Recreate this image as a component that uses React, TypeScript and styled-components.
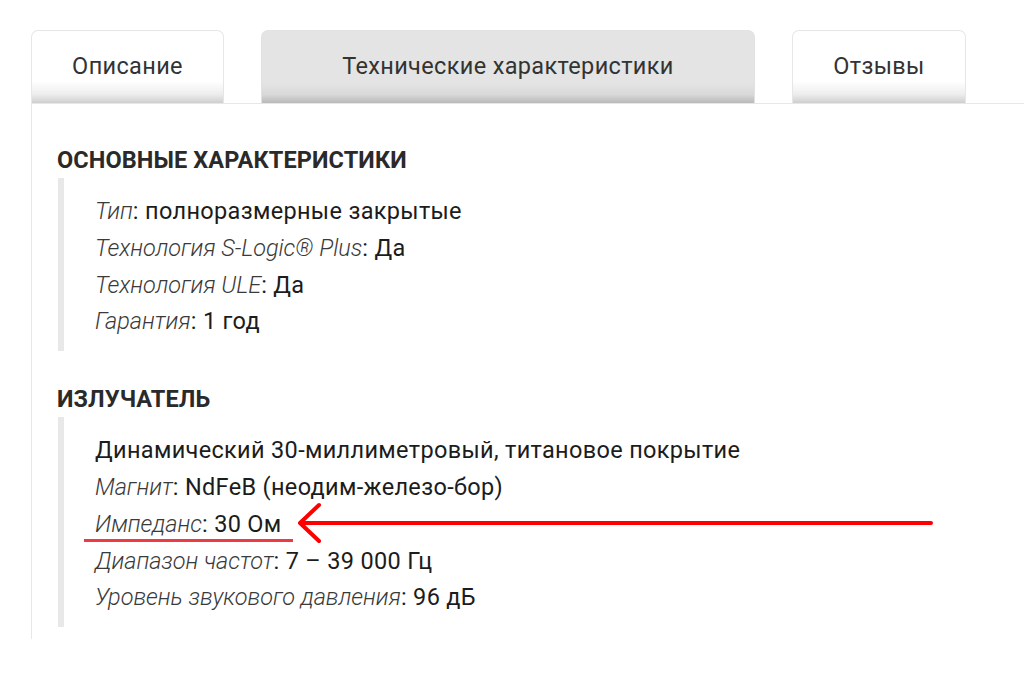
import React from 'react'
import { styled, createGlobalStyle } from 'styled-components';

const GlobalStyle = createGlobalStyle`
	html, body {
		margin: 0;
		padding: 0;
		background: #ffffff;
	}
	body {
		font-family: Roboto, "Noto Sans", "Liberation Sans", sans-serif;
		color: #2b2b2b;
	}
`

type TabProps = {
	$active: boolean;
	$width: number;
}

const Page = styled.div`
	position: relative;
	width: 1024px;
	height: 683px;
	overflow: hidden;
	padding: 30px 0 0 31px;
	box-sizing: border-box;
`
const Tabs = styled.div`
	display: flex;
	gap: 37px;
	height: 73px;
`
const Tab = styled.div<TabProps>`
	width: ${({ $width }) => $width + 'px'};
	box-sizing: border-box;
	display: flex;
	justify-content: center;
	align-items: center;
	padding-bottom: 2px;
	border: 1px solid ${({ $active }) => $active ? '#e2e2e2' : '#e6e6e6'};
	border-bottom: none;
	border-radius: 7px 7px 0 0;
	font-size: 23.5px;
	letter-spacing: 0.35px;
	color: #333333;
	background: ${({ $active }) => $active
		? 'linear-gradient(to bottom, #e4e4e4 0%, #e4e4e4 72%, #d9d9d9 88%, #b9b9b9 100%)'
		: 'linear-gradient(to bottom, #ffffff 0%, #ffffff 70%, #ededed 88%, #cfcfcf 100%)'};
`
const Panel = styled.div`
	border-top: 1px solid #e6e6ee;
	border-left: 1px solid #e6e6ee;
	padding: 44px 0 12px 25px;
`
const Heading = styled.h3`
	margin: 0 0 6px;
	font-size: 23.5px;
	line-height: 24px;
	letter-spacing: 0.1px;
	font-weight: 700;
	color: #2a2a2a;
	text-transform: uppercase;
`
const Quote = styled.div<{ $last?: boolean }>`
	margin: 0 0 ${({ $last }) => $last ? '0' : '36px'} 1px;
	border-left: 6px solid #e8e8e8;
	padding: 15px 0 11px 31px;
`
const Row = styled.div`
	font-size: 23.5px;
	line-height: 36.8px;
	letter-spacing: 0.33px;
	color: #1c1c1c;
	white-space: nowrap;
`
const Label = styled.span`
	font-style: italic;
	font-weight: 300;
	letter-spacing: -0.05px;
	color: #3a3a3a;
`
const Marks = styled.svg`
	position: absolute;
	left: 0;
	top: 0;
	pointer-events: none;
`

type Spec = { label?: string; value: string };

const main: Spec[] = [
	{ label: 'Тип', value: 'полноразмерные закрытые' },
	{ label: 'Технология S-Logic® Plus', value: 'Да' },
	{ label: 'Технология ULE', value: 'Да' },
	{ label: 'Гарантия', value: '1 год' },
]
const driver: Spec[] = [
	{ value: 'Динамический 30-миллиметровый, титановое покрытие' },
	{ label: 'Магнит', value: 'NdFeB (неодим-железо-бор)' },
	{ label: 'Импеданс', value: '30 Ом' },
	{ label: 'Диапазон частот', value: '7 – 39 000 Гц' },
	{ label: 'Уровень звукового давления', value: '96 дБ' },
]

const SpecRow = ({ spec }: { spec: Spec }) => (
	<Row>
		{spec.label && <><Label>{spec.label}</Label>: </>}
		{spec.value}
	</Row>
)

const App = () => {
	return (
		<>
			<GlobalStyle />
			<Page>
				<Tabs>
					<Tab $active={false} $width={193}>Описание</Tab>
					<Tab $active={true} $width={494}>Технические характеристики</Tab>
					<Tab $active={false} $width={174}>Отзывы</Tab>
				</Tabs>
				<Panel>
					<Heading>Основные характеристики</Heading>
					<Quote>
						{main.map((s, i) => <SpecRow key={i} spec={s} />)}
					</Quote>
					<Heading>Излучатель</Heading>
					<Quote $last>
						{driver.map((s, i) => <SpecRow key={i} spec={s} />)}
					</Quote>
				</Panel>
				<Marks width="1024" height="683" viewBox="0 0 1024 683">
					<rect x="84" y="539" width="209" height="3" fill="#ee3a42" />
					<line x1="302" y1="523" x2="931" y2="523" stroke="#ff0000" strokeWidth="4" strokeLinecap="round" />
					<polyline points="319,505 300,523 319,541" fill="none" stroke="#ff0000" strokeWidth="4" strokeLinecap="round" strokeLinejoin="round" />
				</Marks>
			</Page>
		</>
	);
};

export default App
